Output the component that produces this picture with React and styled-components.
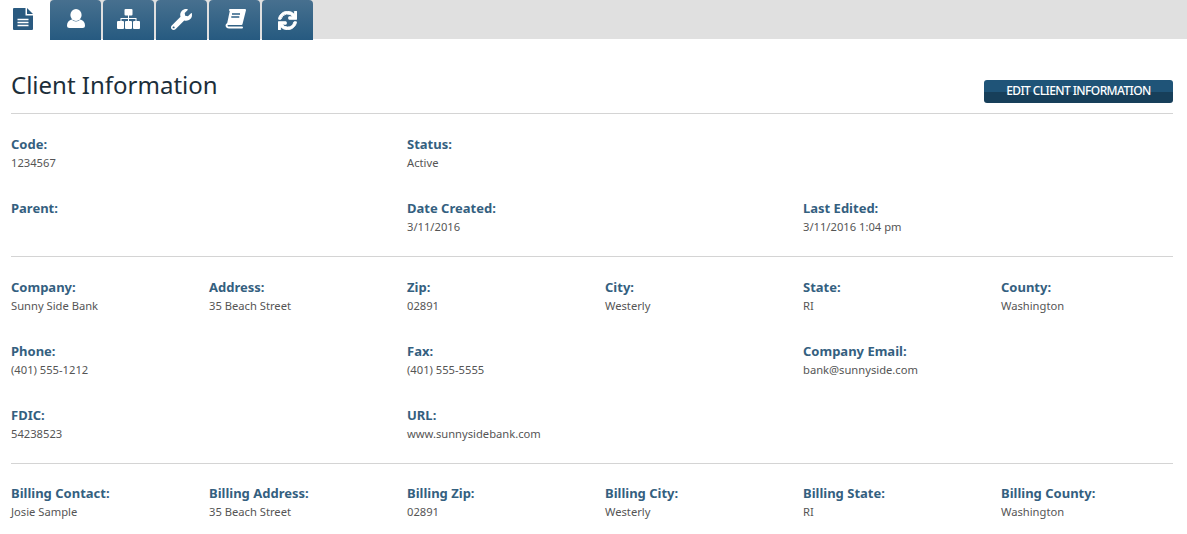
import React from 'react';
import styled,{createGlobalStyle} from "styled-components";
import {FaWrench,FaSync} from "react-icons/fa";

const FileIcon=()=>(
  <svg width="20" height="22" viewBox="0 0 20 22">
    <path d="M0 1q0-1 1-1h11.500v7.500H20V21q0 1-1 1H1q-1 0-1-1z" fill="currentColor" />
    <path d="M14 0l6 6h-6z" fill="currentColor" />
    <path d="M4.500 11.500h11M4.500 14.500h11M4.500 17.500h11" stroke="#fff" strokeWidth="1.300" />
  </svg>
);

const UserIcon=()=>(
  <svg width="18" height="19" viewBox="0 0 18 19" fill="currentColor">
    <ellipse cx="9" cy="6" rx="5.600" ry="6" />
    <path d="M4.500 10.500Q9 14.500 13.500 10.500Q18 12 18 16.500Q18 19 15.500 19H2.500Q0 19 0 16.500Q0 12 4.500 10.500z" />
  </svg>
);

const SitemapIcon=()=>(
  <svg width="23" height="20" viewBox="0 0 23 20" fill="currentColor">
    <rect x="7.500" y="0" width="8" height="6.500" rx="1" />
    <path d="M11 6h1v3h7.500v4h-1v-3H12v3h-1v-3H4.500v3h-1V9H11z" />
    <rect x="0" y="12" width="7" height="8" rx="1" />
    <rect x="8" y="12" width="7" height="8" rx="1" />
    <rect x="16" y="12" width="7" height="8" rx="1" />
  </svg>
);

const BookIcon=()=>(
  <svg width="22" height="20" viewBox="0 0 22 20">
    <path d="M6 1h15l-3.500 14H4.500q-2.500 0-1.800 2.200 .4 1.300 2.300 1.300h13" fill="none" stroke="currentColor" strokeWidth="2" strokeLinejoin="round" strokeLinecap="round" />
    <path d="M6 1h15l-3.500 14H3z" fill="currentColor" />
    <path d="M8 5h8M7.300 8h8" stroke="#2f6186" strokeWidth="1.400" />
  </svg>
);

const SyncIcon=styled(FaSync)`
  width:19px;
  height:19px;
  margin-top:2px;
  stroke:currentColor;
  stroke-width:24px;
`

const sections=[
  [
    {label:"Code",value:"1234567",span:2},
    {label:"Status",value:"Active",span:4},
    {label:"Parent",value:"",span:2},
    {label:"Date Created",value:"3/11/2016",span:2},
    {label:"Last Edited",value:"3/11/2016 1:04 pm",span:2},
  ],
  [
    {label:"Company",value:"Sunny Side Bank"},
    {label:"Address",value:"35 Beach Street"},
    {label:"Zip",value:"02891"},
    {label:"City",value:"Westerly"},
    {label:"State",value:"RI"},
    {label:"County",value:"Washington"},
    {label:"Phone",value:"(401) 555-1212",span:2},
    {label:"Fax",value:"(401) 555-5555",span:2},
    {label:"Company Email",value:"bank@sunnyside.com",span:2},
    {label:"FDIC",value:"54238523",span:2},
    {label:"URL",value:"www.sunnysidebank.com",span:4},
  ],
  [
    {label:"Billing Contact",value:"Josie Sample"},
    {label:"Billing Address",value:"35 Beach Street"},
    {label:"Billing Zip",value:"02891"},
    {label:"Billing City",value:"Westerly"},
    {label:"Billing State",value:"RI"},
    {label:"Billing County",value:"Washington"},
  ],
];

const tabs=[<UserIcon />,<SitemapIcon />,<FaWrench />,<BookIcon />,<SyncIcon />];

function App() {
  return (
    <Page>
      <GlobalStyle />
      <TabBar>
        <ActiveTab><FileIcon /></ActiveTab>
        {tabs.map((icon,i)=>(
          <Tab key={i}>{icon}</Tab>
        ))}
      </TabBar>
      <Content>
        <Header>
          <Title>Client Information</Title>
          <EditButton>EDIT CLIENT INFORMATION</EditButton>
        </Header>
        {sections.map((fields,i)=>(
          <Section key={i}>
            {fields.map((f)=>(
              <Field key={f.label} $span={f.span || 1}>
                <Label>{f.label}:</Label>
                <Value>{f.value}</Value>
              </Field>
            ))}
          </Section>
        ))}
      </Content>
    </Page>
  )
}

const GlobalStyle=createGlobalStyle`
  html,body{
    margin:0;
    padding:0;
    background:#fff;
    overflow:hidden;
  }
`
const Page=styled.div`
  width:1187px;
  height:534px;
  overflow:hidden;
  font-family:"Noto Sans",sans-serif;
`
const TabBar=styled.div`
  display:flex;
  height:39px;
  background:#e0e0e0;
`
const ActiveTab=styled.div`
  width:50px;
  height:40px;
  background:#fff;
  display:flex;
  justify-content:center;
  padding:8px 4px 0 0;
  box-sizing:border-box;
  color:#2a5a80;
`
const Tab=styled.div`
  width:51px;
  height:40px;
  margin-right:2px;
  border-radius:4px 4px 0 0;
  background:linear-gradient(#47708f,#265a80);
  color:#fff;
  display:flex;
  justify-content:center;
  padding-top:9px;
  box-sizing:border-box;
  font-size:21px;
`
const Content=styled.div`
  padding:0 14px 0 11px;
`
const Header=styled.div`
  display:flex;
  justify-content:space-between;
  align-items:flex-start;
  height:74px;
  border-bottom:1px solid #d4d4d4;
`
const Title=styled.h1`
  margin:28px 0 0;
  font-size:24px;
  line-height:36px;
  font-weight:400;
  color:#1c2e3a;
`
const EditButton=styled.button`
  width:189px;
  height:23px;
  margin-top:41px;
  padding:0 0 2px;
  border:none;
  border-radius:3px;
  background:linear-gradient(#1f5478 50%,#173f5a 50%);
  color:#fff;
  font-family:inherit;
  font-size:12px;
  font-weight:500;
  letter-spacing:-0.6px;
`
const Section=styled.div`
  display:grid;
  grid-template-columns:repeat(6,198px);
  grid-auto-rows:40px;
  row-gap:24px;
  padding:20px 0 18px;
  border-bottom:1px solid #d4d4d4;
  &:last-child{
    padding-top:19px;
    border-bottom:none;
  }
`
const Field=styled.div`
  grid-column:span ${(p)=>p.$span};
`
const Label=styled.div`
  font-size:13px;
  line-height:20px;
  font-weight:700;
  color:#34607f;
`
const Value=styled.div`
  font-size:11.2px;
  line-height:18px;
  color:#555;
`

export default App;
